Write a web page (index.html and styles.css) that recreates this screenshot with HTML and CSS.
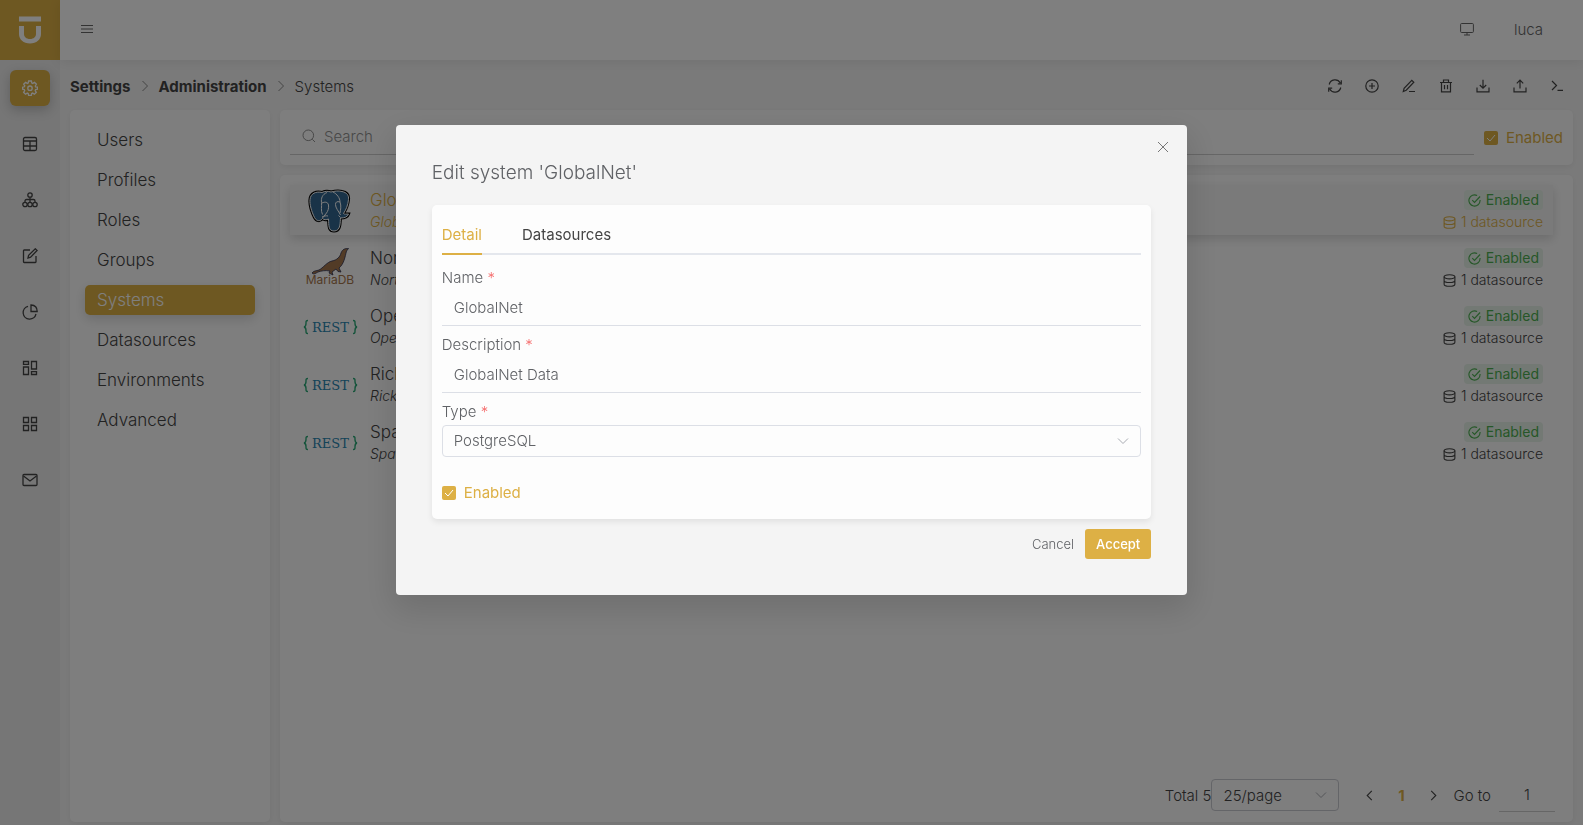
FILE: index.html
```html
<!DOCTYPE html>
<html lang="en">
<head>
    <meta charset="UTF-8">
    <meta name="viewport" content="width=device-width, initial-scale=1.0">
    <title>Systems</title>
    <link rel="stylesheet" href="styles.css">
</head>
<body>
    <svg class="sprite" aria-hidden="true">
        <symbol id="i-check" viewBox="0 0 14 14"><path d="M13 6.500v.5a6 6 0 1 1-3.200-5.300M4.600 6.600 7 9l6-6.300"/></symbol>
        <symbol id="i-db" viewBox="0 0 14 14"><ellipse cx="7" cy="3" rx="5.800" ry="2.200"/><path d="M1.200 3v8c0 1.200 2.600 2.200 5.800 2.200s5.800-1 5.800-2.200V3M1.200 7c0 1.200 2.600 2.200 5.800 2.200s5.800-1 5.800-2.200"/></symbol>
        <symbol id="i-down" viewBox="0 0 12 12"><path d="m1 3.500 5 5 5-5"/></symbol>
        <symbol id="i-right" viewBox="0 0 12 12"><path d="m3.500 1 5 5-5 5"/></symbol>
        <symbol id="i-left" viewBox="0 0 12 12"><path d="m8.500 1-5 5 5 5"/></symbol>
        <symbol id="i-rest" viewBox="0 0 60 44">
            <path class="rest-brace" d="M8 15.500c-2.200 0-2 1.200-2 3s0 3-2 3.500c2 .5 2 1.700 2 3.500s-.2 3 2 3M53 15.500c2.200 0 2 1.200 2 3s0 3 2 3.500c-2 .5-2 1.700-2 3.500s.2 3-2 3"/>
            <text x="30.500" y="26.500" text-anchor="middle" class="rest-word">REST</text>
        </symbol>
    </svg>

    <div class="app">
        <aside class="sidebar">
            <a class="logo" href="#" aria-label="Home">
                <svg width="22" height="28" viewBox="0 0 22 28"><path d="M0 .5h22v5H0zM0 10h5v8c0 2.800 2.200 5 6 5s6-2.200 6-5v-8h5v8c0 5.500-4.500 9.500-11 9.500S0 23.500 0 18z"/></svg>
            </a>
            <nav class="rail">
                <a class="rail-item active" href="#" aria-label="Settings"><svg viewBox="0 0 16 16"><path d="M6.600 1h2.800l.4 2 1 .4 1.700-1.100 1.900 1.900L13.300 6l.3.900 1.900.3v2l-1.900.4-.4 1 1.100 1.700-1.900 1.900-1.700-1.100-1 .4-.4 2H6.600l-.4-2-1-.4-1.700 1.100-1.900-1.900 1.100-1.700-.4-1L.600 9.200v-2l1.800-.4.4-1-1.100-1.600 1.900-1.900 1.700 1.100.9-.4z"/><circle cx="8" cy="8.200" r="2.200"/></svg></a>
                <a class="rail-item" href="#" aria-label="Tables"><svg viewBox="0 0 16 16"><rect x="1.500" y="1.500" width="13" height="13" rx="1.500"/><path d="M1.500 5h13M1.500 10h13M8 5v9.500"/></svg></a>
                <a class="rail-item" href="#" aria-label="Hierarchy"><svg viewBox="0 0 16 16"><circle cx="8" cy="3" r="2.200"/><circle cx="3" cy="12.500" r="2.200"/><circle cx="8" cy="12.500" r="2.200"/><circle cx="13" cy="12.500" r="2.200"/><path d="M8 5.200v5M3 10V9c0-1 .5-1.500 1.500-1.500h7c1 0 1.500.5 1.500 1.500v1"/></svg></a>
                <a class="rail-item" href="#" aria-label="Edit"><svg viewBox="0 0 16 16"><path d="M8 2H2.200c-.5 0-.7.200-.7.700v11.100c0 .5.200.7.700.7h11.100c.5 0 .7-.2.7-.7V8M6 10l.6-2.700 6.700-6.500 1.800 1.700-6.500 6.700z"/></svg></a>
                <a class="rail-item" href="#" aria-label="Charts"><svg viewBox="0 0 16 16"><path d="M6 2.300A6.500 6.500 0 1 0 14 10M9 1v6.500h6.200C15.200 3.500 12.500 1.200 9 1z"/></svg></a>
                <a class="rail-item" href="#" aria-label="Dashboards"><svg viewBox="0 0 16 16"><path d="M1.500 1.500h5v2.800h-5zM1.500 7h5v7.500h-5zM9.500 1.500h5V9h-5zM9.500 11.700h5v2.800h-5z"/></svg></a>
                <a class="rail-item" href="#" aria-label="Apps"><svg viewBox="0 0 16 16"><path d="M1.500 1.500h5v5h-5zM9.500 1.500h5v5h-5zM1.500 9.500h5v5h-5zM9.500 9.500h5v5h-5z"/></svg></a>
                <a class="rail-item" href="#" aria-label="Messages"><svg viewBox="0 0 16 16"><rect x="1" y="2.500" width="14" height="11" rx="1"/><path d="m1.500 4 6.500 5 6.500-5"/></svg></a>
            </nav>
        </aside>

        <div class="page">
            <header class="topbar">
                <button class="icon-btn" aria-label="Menu"><svg width="12" height="10" viewBox="0 0 12 10"><path d="M0 1.500h12M0 5h12M0 8.500h12"/></svg></button>
                <div class="user">
                    <svg width="14" height="14" viewBox="0 0 14 14"><rect x=".6" y="1.500" width="12.800" height="9" rx="1"/><path d="M7 10.500V13M4 13h6"/></svg>
                    <span>luca</span>
                </div>
            </header>

            <div class="crumb-bar">
                <nav class="crumbs">
                    <a href="#">Settings</a>
                    <svg><use href="#i-right"/></svg>
                    <a href="#">Administration</a>
                    <svg><use href="#i-right"/></svg>
                    <span>Systems</span>
                </nav>
                <div class="tools">
                    <button class="icon-btn" aria-label="Refresh"><svg viewBox="0 0 14 14"><path d="M1.200 5.500A6 6 0 0 1 12.300 4M12.800 8.500A6 6 0 0 1 1.700 10M13.300 1.300v3.500H9.800M.7 12.700V9.200h3.500"/></svg></button>
                    <button class="icon-btn" aria-label="Add"><svg viewBox="0 0 14 14"><circle cx="7" cy="7" r="6.200"/><path d="M7 4v6M4 7h6"/></svg></button>
                    <button class="icon-btn" aria-label="Edit"><svg viewBox="0 0 14 14"><path d="m1.300 12.500.8-3.200 7.700-8 2 1.900-7.600 8zM7 12.500h6"/></svg></button>
                    <button class="icon-btn" aria-label="Delete"><svg viewBox="0 0 14 14"><path d="M1 3.500h12M2.500 3.500v9.300h9V3.500M4.500 3.300V1h5v2.300M5.500 6v4.200M8.500 6v4.200"/></svg></button>
                    <button class="icon-btn" aria-label="Download"><svg viewBox="0 0 14 14"><path d="M1 8.500v4.300h12V8.500M7 .8V9M3.800 6 7 9.200 10.200 6"/></svg></button>
                    <button class="icon-btn" aria-label="Upload"><svg viewBox="0 0 14 14"><path d="M1 8.500v4.300h12V8.500M7 9.500V1.300M3.800 4.300 7 1.100l3.200 3.200"/></svg></button>
                    <button class="icon-btn" aria-label="Console"><svg viewBox="0 0 14 14"><path d="m2 2 4.500 4.500L2 11M7.500 11.300H13"/></svg></button>
                </div>
            </div>

            <main class="content">
                <nav class="menu panel">
                    <a href="#">Users</a>
                    <a href="#">Profiles</a>
                    <a href="#">Roles</a>
                    <a href="#">Groups</a>
                    <a href="#" class="active">Systems</a>
                    <a href="#">Datasources</a>
                    <a href="#">Environments</a>
                    <a href="#">Advanced</a>
                </nav>

                <div class="main-col">
                    <div class="filter panel">
                        <div class="search">
                            <svg width="14" height="14" viewBox="0 0 14 14"><circle cx="6.300" cy="6.300" r="5.300"/><path d="m10.300 10.300 2.700 2.700"/></svg>
                            <input type="text" placeholder="Search" aria-label="Search">
                        </div>
                        <label class="check"><input type="checkbox" checked>Enabled</label>
                    </div>

                    <div class="list-panel panel">
                        <ul class="systems">
                            <li class="selected">
                                <svg class="brand" viewBox="0 0 60 44">
                                    <path class="pg-edge" d="M22 3.500c3-1.500 6-1.500 9-.5 4-1 7-1.500 11-.5 5 1 7 4 6.500 8-.5 6-2.500 10-5 14 1 1 3 .5 5 .5-1 3-4 4-8 4-.5 4 .5 13-6.500 13-6 0-5-6-5.500-12-2 1-5 1-6-.5-2 3-6 3-8-1-3-6-5-13-4.500-18 .5-6 6-8.500 12-7z"/>
                                    <path class="pg-light" d="M22 3.500c3-1.500 6-1.500 9-.5 4-1 7-1.500 11-.5 5 1 7 4 6.500 8-.5 6-2.500 10-5 14 1 1 3 .5 5 .5-1 3-4 4-8 4-.5 4 .5 13-6.500 13-6 0-5-6-5.500-12-2 1-5 1-6-.5-2 3-6 3-8-1-3-6-5-13-4.500-18 .5-6 6-8.500 12-7z"/>
                                    <path class="pg-line" d="M27 3.500c-5 2-6 6-5.500 10s-1 8 1 12M22 14c3-1.500 6-1 6.500 2s-.5 6-2 8l-4 5M33 3c4 2 7 6 7 10M40 13c-3-1-4.500 0-4.500 2.500 0 3.500 3 6.500 5 10.500M40 13c1.500 4 .5 8 0 11M22 28c2-1 4-1.500 6-1M40.500 28.500l-2-2"/>
                                </svg>
                                <div class="sys-name"><strong>GlobalNet</strong><em>GlobalNet</em></div>
                                <div class="sys-info"><span class="tag"><svg><use href="#i-check"/></svg>Enabled</span><span class="count"><svg><use href="#i-db"/></svg>1 datasource</span></div>
                            </li>
                            <li>
                                <svg class="brand" viewBox="0 0 60 44">
                                    <path class="seal" d="M12 26c2-2.500 4-2 7-3 4-2 8-8 13-9 5-1 8-4 9-8 1.500-4 4-4.500 7.500-4.500l-2 2.500c-1.500 6-2.500 13-7.500 17l2 4-3-.5-2-2.500-4 3 1 3-4-2 1-2c-5-1-9 0-12 1-2 1-4 3-6 1z"/>
                                    <text x="30" y="37" text-anchor="middle" class="maria-word">MariaDB</text>
                                </svg>
                                <div class="sys-name"><strong>Northwind</strong><em>Northwind</em></div>
                                <div class="sys-info"><span class="tag"><svg><use href="#i-check"/></svg>Enabled</span><span class="count"><svg><use href="#i-db"/></svg>1 datasource</span></div>
                            </li>
                            <li>
                                <svg class="brand"><use href="#i-rest"/></svg>
                                <div class="sys-name"><strong>OpenData</strong><em>OpenData</em></div>
                                <div class="sys-info"><span class="tag"><svg><use href="#i-check"/></svg>Enabled</span><span class="count"><svg><use href="#i-db"/></svg>1 datasource</span></div>
                            </li>
                            <li>
                                <svg class="brand"><use href="#i-rest"/></svg>
                                <div class="sys-name"><strong>Rick</strong><em>Rick API</em></div>
                                <div class="sys-info"><span class="tag"><svg><use href="#i-check"/></svg>Enabled</span><span class="count"><svg><use href="#i-db"/></svg>1 datasource</span></div>
                            </li>
                            <li>
                                <svg class="brand"><use href="#i-rest"/></svg>
                                <div class="sys-name"><strong>Space</strong><em>Space</em></div>
                                <div class="sys-info"><span class="tag"><svg><use href="#i-check"/></svg>Enabled</span><span class="count"><svg><use href="#i-db"/></svg>1 datasource</span></div>
                            </li>
                        </ul>

                        <div class="pager">
                            <span>Total 5</span>
                            <div class="select">
                                <select aria-label="Page size"><option>25/page</option><option>50/page</option></select>
                                <svg><use href="#i-down"/></svg>
                            </div>
                            <button class="pager-btn prev" aria-label="Previous"><svg><use href="#i-left"/></svg></button>
                            <button class="pager-btn current">1</button>
                            <button class="pager-btn" aria-label="Next"><svg><use href="#i-right"/></svg></button>
                            <label for="goto">Go to</label>
                            <input type="text" id="goto" value="1">
                        </div>
                    </div>
                </div>
            </main>
        </div>
    </div>

    <div class="overlay">
        <div class="modal" role="dialog" aria-labelledby="modal-title">
            <button class="close" aria-label="Close"><svg width="12" height="12" viewBox="0 0 12 12"><path d="m1 1 10 10M11 1 1 11"/></svg></button>
            <h2 id="modal-title">Edit system 'GlobalNet'</h2>
            <form id="system-form" class="card">
                <div class="tabs" role="tablist">
                    <button type="button" role="tab" class="active">Detail</button>
                    <button type="button" role="tab">Datasources</button>
                </div>
                <label class="field-label" for="name">Name <i>*</i></label>
                <input class="line-input" type="text" id="name" value="GlobalNet">
                <label class="field-label" for="description">Description <i>*</i></label>
                <input class="line-input" type="text" id="description" value="GlobalNet Data">
                <label class="field-label" for="type">Type <i>*</i></label>
                <div class="select">
                    <select id="type"><option>PostgreSQL</option><option>MariaDB</option><option>REST</option></select>
                    <svg><use href="#i-down"/></svg>
                </div>
                <label class="check"><input type="checkbox" checked>Enabled</label>
            </form>
            <div class="actions">
                <button class="btn">Cancel</button>
                <button class="btn primary" form="system-form">Accept</button>
            </div>
        </div>
    </div>
</body>
</html>
```
FILE: styles.css
```css
:root {
    --gold: #ddb045;
    --text: #606266;
    --border: #dcdfe6;
}
* {
    box-sizing: border-box;
}
body {
    margin: 0;
    font-family: Inter, "Open Sans", sans-serif;
    font-size: 15px;
    font-weight: 300;
    color: #444;
    background: #f5f5f5;
}
button, input, select {
    font: inherit;
    color: inherit;
}
button {
    border: none;
    background: none;
    padding: 0;
    cursor: pointer;
}
a {
    color: inherit;
    text-decoration: none;
}
svg {
    fill: none;
    stroke: currentColor;
    flex-shrink: 0;
}
.sprite {
    display: none;
}
.app {
    display: flex;
    height: 100vh;
}

/* left rail */
.sidebar {
    width: 60px;
    background: #ececec;
}
.logo {
    display: flex;
    height: 60px;
    align-items: center;
    justify-content: center;
    background: var(--gold);
}
.logo svg {
    fill: #fff;
    stroke: none;
}
.rail {
    display: flex;
    flex-direction: column;
    align-items: center;
    gap: 20px;
    padding-top: 10px;
}
.rail-item {
    display: flex;
    width: 40px;
    height: 36px;
    align-items: center;
    justify-content: center;
    border-radius: 6px;
}
.rail-item svg {
    width: 16px;
    height: 16px;
    stroke-width: 1.3;
}
.rail-item.active {
    color: #fff;
    background: var(--gold);
    box-shadow: 0 4px 12px rgba(0, 0, 0, 0.2);
}

/* page */
.page {
    flex: 1;
    min-width: 0;
    display: flex;
    flex-direction: column;
}
.topbar {
    display: flex;
    height: 60px;
    flex-shrink: 0;
    align-items: center;
    justify-content: space-between;
    padding: 0 40px 2px 20px;
    background: #fefefe;
    box-shadow: 0 2px 12px rgba(0, 0, 0, 0.08);
    color: #666;
}
.user {
    display: flex;
    align-items: center;
    gap: 40px;
}
.icon-btn {
    display: flex;
    width: 14px;
    height: 14px;
    align-items: center;
    justify-content: center;
}
.crumb-bar {
    display: flex;
    height: 50px;
    flex-shrink: 0;
    align-items: center;
    justify-content: space-between;
    padding: 2px 19px 0 10px;
}
.crumbs {
    display: flex;
    align-items: center;
    gap: 8px;
}
.crumbs a {
    font-weight: 700;
}
.crumbs svg {
    width: 12px;
    height: 12px;
    color: #888;
}
.tools {
    display: flex;
    gap: 23px;
}
.tools svg {
    width: 14px;
    height: 14px;
    stroke-width: 1.2;
}
.content {
    flex: 1;
    min-height: 0;
    display: flex;
    gap: 10px;
    padding: 0 10px 3px;
}
.panel {
    background: #fdfdfd;
    border-radius: 5px;
    box-shadow: 0 2px 6px rgba(0, 0, 0, 0.06);
}
.menu {
    display: flex;
    width: 200px;
    flex-shrink: 0;
    flex-direction: column;
    gap: 10px;
    padding: 15px;
    font-size: 17px;
}
.menu a {
    padding: 0 12px;
    line-height: 30px;
    border-radius: 5px;
}
.menu a.active {
    color: #fff;
    background: var(--gold);
    box-shadow: 0 4px 12px rgba(0, 0, 0, 0.15);
}
.main-col {
    flex: 1;
    min-width: 0;
    display: flex;
    flex-direction: column;
    gap: 10px;
}
.filter {
    display: flex;
    align-items: center;
    gap: 10px;
    padding: 10px;
}
.search {
    display: flex;
    flex: 1;
    height: 35px;
    align-items: flex-start;
    gap: 8px;
    padding: 9px 12px 0;
    border-bottom: 1px solid #ccc;
    color: #909090;
}
.search input {
    flex: 1;
    border: none;
    padding: 0;
    background: none;
    line-height: 16px;
    outline: none;
}
.search input::placeholder {
    color: #909090;
}
.check {
    display: flex;
    align-items: center;
    gap: 8px;
    color: var(--gold);
    font-weight: 400;
}
.check input {
    appearance: none;
    width: 14px;
    height: 14px;
    margin: 0;
    border-radius: 2px;
    background: var(--gold) url("data:image/svg+xml,%3Csvg xmlns='http://www.w3.org/2000/svg' viewBox='0 0 14 14'%3E%3Cpath d='m3 7 3 3 5-6' fill='none' stroke='white'/%3E%3C/svg%3E");
}

/* systems list */
.list-panel {
    flex: 1;
    display: flex;
    flex-direction: column;
    justify-content: space-between;
    padding: 10px 20px 10px 10px;
}
.systems {
    display: flex;
    flex-direction: column;
    gap: 8px;
    margin: 0;
    padding: 0;
    list-style: none;
}
.systems li {
    display: flex;
    height: 50px;
    align-items: center;
    padding: 2px 10px 0;
}
.systems .selected {
    color: var(--gold);
    background: #f4f4f4;
    box-shadow: 0 4px 10px rgba(0, 0, 0, 0.15);
}
.brand {
    width: 60px;
    height: 44px;
}
.pg-edge {
    stroke: #000;
    stroke-width: 3;
}
.pg-light {
    fill: #336791;
    stroke: #fff;
    stroke-width: 1;
}
.pg-line {
    stroke: #fff;
    stroke-width: 1;
}
.seal {
    fill: #a5764c;
    stroke: #2c3152;
    stroke-width: 0.8;
}
.maria-word {
    fill: #a5764c;
    stroke: none;
    font-size: 12px;
    font-weight: 400;
}
.rest-brace {
    fill: none;
    stroke: #2aa876;
    stroke-width: 1.4;
}
.rest-word {
    fill: #2a86b0;
    stroke: none;
    font-family: "DejaVu Serif", serif;
    font-size: 13px;
    font-weight: 400;
}
.sys-name {
    flex: 1;
    padding-left: 10px;
}
.sys-name strong, .sys-name em {
    display: block;
    line-height: 22px;
}
.sys-name strong {
    font-size: 17px;
    font-weight: 300;
}
.sys-name em {
    font-size: 14px;
}
.sys-info {
    display: flex;
    flex-direction: column;
    align-items: flex-end;
    gap: 2px;
    font-size: 14px;
    line-height: 20px;
}
.tag, .count {
    display: flex;
    align-items: center;
    gap: 5px;
}
.tag {
    padding: 0 4px;
    border-radius: 4px;
    color: #4caf50;
    background: #e6f2e8;
    font-weight: 400;
}
.tag svg, .count svg {
    width: 13px;
    height: 13px;
    stroke-width: 1.2;
}

/* pagination */
.pager {
    display: flex;
    align-items: center;
    justify-content: flex-end;
    margin-right: -2px;
}
.select {
    position: relative;
    color: var(--text);
}
.select select {
    display: block;
    appearance: none;
    width: 100%;
    height: 32px;
    padding: 0 11px;
    border: 1px solid var(--border);
    border-radius: 4px;
    background: none;
}
.select svg {
    position: absolute;
    right: 12px;
    top: 10px;
    width: 12px;
    height: 12px;
    color: #a8abb2;
    pointer-events: none;
}
.pager .select {
    width: 128px;
    color: #444;
}
.pager .select select {
    border-color: #c8cad0;
}
.pager-btn {
    width: 32px;
    height: 32px;
}
.pager-btn svg {
    width: 11px;
    height: 11px;
    stroke-width: 1.2;
}
.pager-btn.prev {
    margin-left: 14px;
}
.pager-btn.current {
    color: var(--gold);
    font-weight: 700;
}
.pager label {
    margin: 0 8px 0 4px;
}
.pager input {
    width: 56px;
    height: 34px;
    padding: 0;
    border: none;
    border-bottom: 1px solid #ccc;
    background: none;
    text-align: center;
}

/* dialog */
.overlay {
    position: fixed;
    inset: 0;
    padding-top: 1px;
    background: rgba(0, 0, 0, 0.5);
}
.modal {
    position: relative;
    width: 50%;
    margin: 15vh auto 0;
    padding: 36px;
    border-radius: 4px;
    background: #f4f4f4;
    box-shadow: 0 12px 32px 4px rgba(0, 0, 0, 0.12);
    color: var(--text);
}
.close {
    position: absolute;
    top: 16px;
    right: 18px;
    display: flex;
    color: #777;
}
.modal h2 {
    margin: 0 0 20px;
    font-size: 19px;
    font-weight: 300;
    line-height: 24px;
}
.card {
    display: flex;
    flex-direction: column;
    padding: 10px;
    border-radius: 5px;
    background: #fdfdfd;
    box-shadow: 0 3px 6px rgba(0, 0, 0, 0.08);
}
.tabs {
    display: flex;
    gap: 40px;
    height: 40px;
    margin-bottom: 12px;
    border-bottom: 2px solid #e4e7ed;
}
.tabs button {
    height: 40px;
    padding-top: 2px;
    border-bottom: 2px solid transparent;
    color: #444;
    font-weight: 400;
}
.tabs .active {
    color: var(--gold);
    border-color: var(--gold);
}
.field-label {
    line-height: 22px;
}
.field-label i {
    color: #f56c6c;
    font-style: normal;
}
.line-input {
    height: 37px;
    margin-bottom: 8px;
    padding: 2px 12px 0;
    border: none;
    border-bottom: 1px solid var(--border);
    background: none;
    outline: none;
}
.card .select {
    margin: 2px 0 26px;
}
.card .check {
    align-self: flex-start;
    height: 20px;
    margin-bottom: 6px;
}
.actions {
    display: flex;
    justify-content: flex-end;
    padding-top: 10px;
    font-size: 13px;
}
.btn {
    height: 30px;
    padding: 0 11px;
    border-radius: 3px;
}
.btn.primary {
    color: #fff;
    background: var(--gold);
    font-weight: 500;
}
```
